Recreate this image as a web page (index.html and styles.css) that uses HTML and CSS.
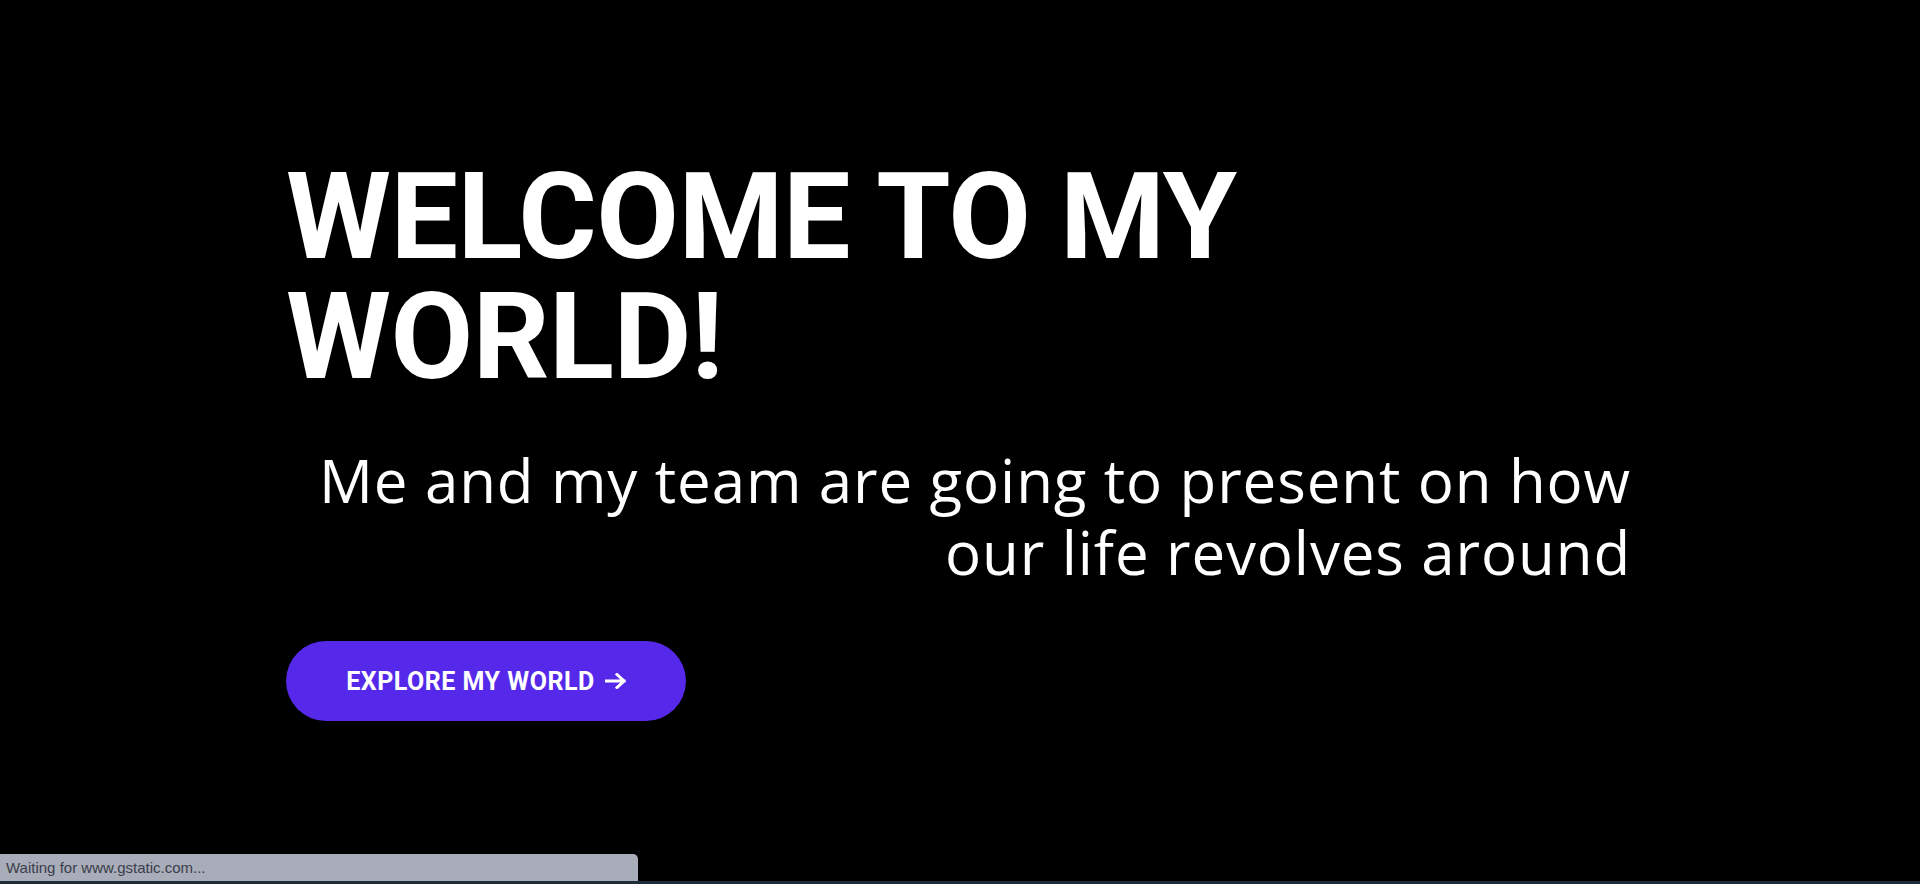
FILE: index.html
```html
<!DOCTYPE html>
<html lang="en">
<head>
<meta charset="utf-8">
<title>Welcome to my world</title>
<link rel="stylesheet" href="styles.css">
</head>
<body>
<main class="hero">
  <div class="hero-inner">
    <h1 class="hero-title">WELCOME TO MY WORLD!</h1>
    <p class="hero-sub">Me and my team are going to present on how our life revolves around</p>
    <a class="hero-btn" href="#">
      <span>EXPLORE MY WORLD</span>
      <svg class="arrow" width="21" height="16" viewBox="0 0 21 16" aria-hidden="true">
        <path d="M1 8H19M12 1.5L19 8L12 14.5" fill="none" stroke="#fff" stroke-width="3" stroke-linecap="square" stroke-linejoin="miter"/>
      </svg>
    </a>
  </div>
</main>
<div class="status-bar">Waiting for www.gstatic.com...</div>
<div class="taskbar-edge"></div>
</body>
</html>
```
FILE: styles.css
```css
html, body {
  margin: 0;
  padding: 0;
  background: #000;
  height: 100%;
}

body {
  overflow: hidden;
  color: #fff;
}

.hero {
  padding: 157px 0 0 286px;
}

.hero-inner {
  width: 1345px;
  display: flex;
  flex-direction: column;
  align-items: flex-start;
}

.hero-title {
  margin: 0;
  max-width: 1000px;
  font-family: Roboto, "Liberation Sans", sans-serif;
  font-weight: 700;
  font-size: 120px;
  line-height: 120px;
  letter-spacing: -0.5px;
}

.hero-sub {
  margin: 47px 0 0;
  align-self: stretch;
  text-align: right;
  font-family: "Open Sans", "Liberation Sans", sans-serif;
  font-weight: 400;
  font-size: 60px;
  line-height: 72px;
  letter-spacing: 0.9px;
}

.hero-btn {
  margin-top: 53px;
  width: 400px;
  height: 80px;
  border-radius: 40px;
  background: #5629ea;
  color: #fff;
  text-decoration: none;
  display: flex;
  align-items: center;
  justify-content: center;
  gap: 10px;
  font-family: Roboto, "Liberation Sans", sans-serif;
  font-weight: 700;
  font-size: 25px;
  letter-spacing: 0.5px;
}

.arrow {
  display: block;
}

.status-bar {
  position: fixed;
  left: 0;
  bottom: 3px;
  width: 632px;
  height: 27px;
  padding-left: 6px;
  background: #a9acb9;
  border-top-right-radius: 5px;
  color: #3a3e4a;
  font-family: "Liberation Sans", Arial, sans-serif;
  font-size: 15px;
  line-height: 27px;
}

.taskbar-edge {
  position: fixed;
  left: 0;
  right: 0;
  bottom: 0;
  height: 3px;
  background: #1f2d3a;
}
```
